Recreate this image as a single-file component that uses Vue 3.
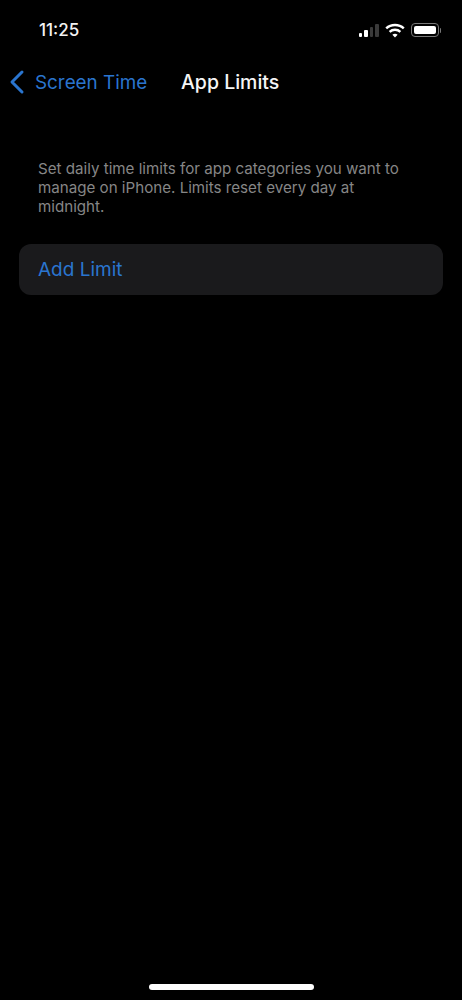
<script setup>
const bars = [
  { h: 4, c: '#fff' },
  { h: 7, c: '#fff' },
  { h: 10, c: '#3a3a3a' },
  { h: 13, c: '#3a3a3a' }
]
</script>

<template>
  <div class="screen">
    <div class="status">
      <span class="time">11:25</span>
      <div class="indicators">
        <div class="signal">
          <i v-for="(b, n) in bars" :key="n" :style="{ height: b.h + 'px', background: b.c }"></i>
        </div>
        <svg class="wifi" width="20" height="15" viewBox="0 0 20 15" fill="none" stroke="#fff" stroke-width="2.4">
          <path d="M1.2 5.4C6 .9 14 .9 18.8 5.4" />
          <path d="M4.6 8.8c3-2.7 7.8-2.7 10.8 0" />
          <path d="M10 14.6 7.4 11.7c1.5-1.2 3.7-1.2 5.2 0z" fill="#fff" stroke="none" />
        </svg>
        <div class="battery">
          <div class="body"><div class="level"></div></div>
          <div class="nub"></div>
        </div>
      </div>
    </div>

    <div class="nav">
      <div class="back">
        <svg width="16" height="26" viewBox="0 0 16 26" fill="none" stroke="#2a75cf" stroke-width="3" stroke-linecap="round" stroke-linejoin="round">
          <path d="M13 3 3 13l10 10" />
        </svg>
        <span>Screen Time</span>
      </div>
      <span class="title">App Limits</span>
    </div>

    <p class="note">Set daily time limits for app categories you want to manage on iPhone. Limits reset every day at midnight.</p>

    <div class="card">Add Limit</div>

    <div class="spacer"></div>
    <div class="home"></div>
  </div>
</template>

<style scoped>
.screen {
  width: 462px;
  height: 1000px;
  background: #000;
  display: flex;
  flex-direction: column;
  font-family: Inter, "Liberation Sans", sans-serif;
  overflow: hidden;
}
.status {
  height: 60px;
  flex: none;
  display: flex;
  justify-content: space-between;
  align-items: center;
  padding: 0 21px 0 39px;
  box-sizing: border-box;
}
.time {
  color: #f2f2f2;
  font-size: 17px;
  font-weight: 500;
  line-height: 20px;
}
.indicators {
  display: flex;
  align-items: center;
  gap: 6px;
}
.signal {
  display: flex;
  align-items: flex-end;
  gap: 2px;
  height: 14px;
}
.signal i {
  display: block;
  width: 3.5px;
  border-radius: 1px;
}
.battery {
  display: flex;
  align-items: center;
  gap: 1px;
}
.body {
  width: 28px;
  height: 14px;
  box-sizing: border-box;
  border: 1px solid #777;
  border-radius: 4px;
  padding: 2px;
}
.level {
  height: 100%;
  background: #fff;
  border-radius: 2px;
}
.nub {
  width: 1.5px;
  height: 5px;
  background: #777;
  border-radius: 0 1px 1px 0;
}
.nav {
  flex: none;
  height: 44px;
  display: flex;
  align-items: center;
  padding-left: 9px;
}
.back {
  display: flex;
  align-items: center;
  gap: 10px;
  color: #2a75cf;
  font-size: 18.85px;
  width: 172px;
}
.title {
  color: #f5f5f5;
  font-size: 19.5px;
  font-weight: 500;
}
.note {
  margin: 55px 0 0;
  padding: 0 52px 0 38px;
  color: #868686;
  font-size: 15.15px;
  line-height: 19px;
}
.card {
  flex: none;
  margin: 28px 19px 0;
  height: 51px;
  background: #1a1a1c;
  border-radius: 12px;
  display: flex;
  align-items: center;
  padding-left: 19px;
  color: #2a75cf;
  font-size: 19px;
}
.spacer {
  flex: 1;
}
.home {
  flex: none;
  width: 165px;
  height: 6px;
  border-radius: 3px;
  background: #fff;
  margin: 0 auto 10px;
}
</style>
